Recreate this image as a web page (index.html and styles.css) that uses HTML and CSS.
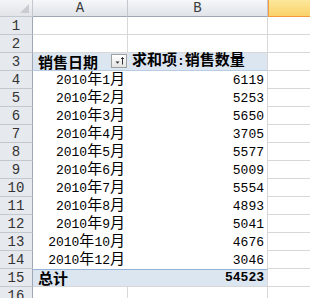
FILE: index.html
```html
<!DOCTYPE html>
<html>
<head>
<meta charset="utf-8">
<link rel="stylesheet" href="styles.css">
</head>
<body>
<div class="sheet">
  <div class="corner"><span class="tri"></span></div>
  <div class="colhead">A</div>
  <div class="colhead">B</div>
  <div class="colhead sel"></div>

  <div class="rowhead">1</div><div class="cell"></div><div class="cell"></div><div class="cell c"></div>
  <div class="rowhead">2</div><div class="cell"></div><div class="cell"></div><div class="cell c"></div>

  <div class="rowhead">3</div>
  <div class="cell ph pa bold"><span class="k">销售日期</span><span class="fbtn"><svg width="13" height="12" viewBox="0 0 13 12"><path d="M2.5 6.5h4l-2 2.2z" fill="#333"/><path d="M9.5 2.5v7M8 4l1.5-1.5L11 4" stroke="#333" stroke-width="1" fill="none"/></svg></span></div>
  <div class="cell ph pb bold"><span class="k">求和项</span>:<span class="k">销售数量</span></div>
  <div class="cell c"></div>

  <div class="rowhead">4</div><div class="cell pa r">2010<span class="k">年</span>1<span class="k">月</span></div><div class="cell pb r">6119</div><div class="cell c"></div>
  <div class="rowhead">5</div><div class="cell pa r">2010<span class="k">年</span>2<span class="k">月</span></div><div class="cell pb r">5253</div><div class="cell c"></div>
  <div class="rowhead">6</div><div class="cell pa r">2010<span class="k">年</span>3<span class="k">月</span></div><div class="cell pb r">5650</div><div class="cell c"></div>
  <div class="rowhead">7</div><div class="cell pa r">2010<span class="k">年</span>4<span class="k">月</span></div><div class="cell pb r">3705</div><div class="cell c"></div>
  <div class="rowhead">8</div><div class="cell pa r">2010<span class="k">年</span>5<span class="k">月</span></div><div class="cell pb r">5577</div><div class="cell c"></div>
  <div class="rowhead">9</div><div class="cell pa r">2010<span class="k">年</span>6<span class="k">月</span></div><div class="cell pb r">5009</div><div class="cell c"></div>
  <div class="rowhead">10</div><div class="cell pa r">2010<span class="k">年</span>7<span class="k">月</span></div><div class="cell pb r">5554</div><div class="cell c"></div>
  <div class="rowhead">11</div><div class="cell pa r">2010<span class="k">年</span>8<span class="k">月</span></div><div class="cell pb r">4893</div><div class="cell c"></div>
  <div class="rowhead">12</div><div class="cell pa r">2010<span class="k">年</span>9<span class="k">月</span></div><div class="cell pb r">5041</div><div class="cell c"></div>
  <div class="rowhead">13</div><div class="cell pa r">2010<span class="k">年</span>10<span class="k">月</span></div><div class="cell pb r">4676</div><div class="cell c"></div>
  <div class="rowhead">14</div><div class="cell pa r">2010<span class="k">年</span>12<span class="k">月</span></div><div class="cell pb r">3046</div><div class="cell c"></div>

  <div class="rowhead">15</div>
  <div class="cell pt pa bold"><span class="k">总计</span></div>
  <div class="cell pt pb r bold">54523</div>
  <div class="cell c"></div>

  <div class="rowhead">16</div><div class="cell"></div><div class="cell"></div><div class="cell c"></div>
</div>
</body>
</html>
```
FILE: styles.css
```css
html, body {
  margin: 0;
  padding: 0;
  background: #fff;
  overflow: hidden;
}
.sheet {
  display: grid;
  grid-template-columns: 33px 95px 140px 60px;
  grid-template-rows: 17px repeat(16, 18px);
  width: 310px;
  height: 298px;
  overflow: hidden;
  font-family: "Liberation Mono", "Noto Sans CJK SC", monospace;
  font-size: 13px;
  color: #000;
}
.k {
  font-family: "Noto Sans CJK SC", sans-serif;
  font-size: 15px;
  line-height: 16px;
}
.corner {
  position: relative;
  box-sizing: border-box;
  background: linear-gradient(#f4f5f7, #e1e4e8);
  border-right: 1px solid #c3c8cf;
  border-bottom: 1px solid #c3c8cf;
}
.tri {
  position: absolute;
  right: 3px;
  bottom: 3px;
  width: 0;
  height: 0;
  border-left: 9px solid transparent;
  border-bottom: 9px solid #c9ccd1;
}
.colhead {
  box-sizing: border-box;
  background: linear-gradient(#f6f7f9, #dfe3e8);
  border-right: 1px solid #c3c8cf;
  border-bottom: 1px solid #9ea7b3;
  display: flex;
  align-items: center;
  justify-content: center;
  color: #3b3b3b;
  font-size: 14px;
  line-height: 16px;
}
.colhead.sel {
  background: linear-gradient(#fde79b, #f9d26a);
  border-left: 1px solid #f29a3c;
  border-bottom: 1px solid #f29a3c;
  border-right: none;
}
.rowhead {
  box-sizing: border-box;
  background: #e6e9ee;
  border-right: 1px solid #9ea7b3;
  border-bottom: 1px solid #c3c8cf;
  display: flex;
  align-items: flex-end;
  justify-content: center;
  color: #333;
  font-size: 14px;
  line-height: 16px;
}
.cell {
  box-sizing: border-box;
  border-right: 1px solid #d8d8d8;
  border-bottom: 1px solid #d8d8d8;
  display: flex;
  align-items: baseline;
  align-content: flex-end;
  flex-wrap: wrap;
  line-height: 16px;
  white-space: nowrap;
}
.cell.c {
  border-right: none;
}
.pa {
  border-right: none;
  border-bottom: none;
  background: #fff;
  padding: 0 3px 0 5px;
}
.pb {
  border-bottom: none;
  background: #fff;
  padding: 0 3px 0 4px;
}
.r {
  justify-content: flex-end;
}
.ph {
  background: #dce6f1;
  border-bottom: 1px solid #b8cce4;
}
.pt {
  background: #dce6f1;
  border-top: 1px solid #95b3d7;
  border-bottom: 1px solid #d8d8d8;
}
.bold {
  font-weight: bold;
}
.cell.ph.pa {
  flex-wrap: nowrap;
  justify-content: space-between;
  align-items: flex-end;
  padding-right: 1px;
}
.fbtn {
  box-sizing: border-box;
  width: 16px;
  height: 14px;
  margin-bottom: 2px;
  border: 1px solid #a0a0a0;
  background: linear-gradient(#ffffff, #e4e4e4);
  display: flex;
  align-items: center;
  justify-content: center;
}
.fbtn svg {
  display: block;
}
```
